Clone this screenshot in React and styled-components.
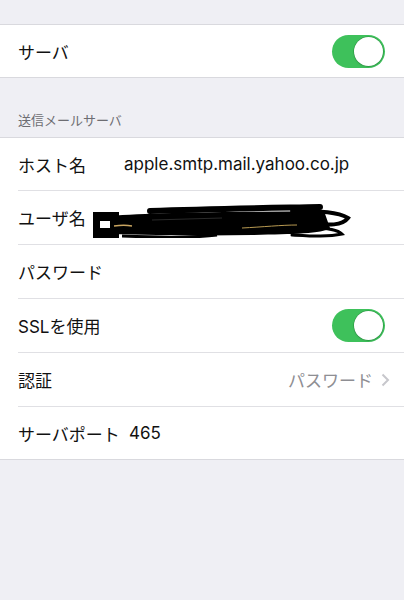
import React from 'react';
import styled, { createGlobalStyle } from 'styled-components';

const GlobalStyle = createGlobalStyle`
  html, body {
    margin: 0;
    padding: 0;
    background: #efeff4;
  }
  body {
    font-family: "Inter", "Noto Sans CJK JP", sans-serif;
    -webkit-font-smoothing: antialiased;
  }
`;

const Page = styled.div`
  width: 404px;
  height: 600px;
  background: #efeff4;
  padding-top: 24px;
  box-sizing: border-box;
`;

const Group = styled.div`
  background: #fff;
  border-top: 1px solid #d9d9de;
  border-bottom: 1px solid #d9d9de;
`;

const Row = styled.div`
  display: flex;
  align-items: center;
  height: ${p => p.$h || 53}px;
  margin-left: 18px;
  padding-right: 18px;
  border-bottom: ${p => (p.$last ? 'none' : '1px solid #e0e0e4')};
  box-sizing: content-box;
`;

const Label = styled.div`
  font-size: 17px;
  color: #111;
  width: ${p => (p.$w ? `${p.$w}px` : 'auto')};
  flex: ${p => (p.$w ? 'none' : '1')};
  white-space: nowrap;
`;

const Value = styled.div`
  flex: 1;
  font-size: 17px;
  color: #111;
  white-space: nowrap;
`;

const Detail = styled.div`
  display: flex;
  align-items: center;
  gap: 8px;
  font-size: 17px;
  color: #8e8e93;
  margin-right: -4px;
`;

const SectionHeader = styled.div`
  height: 59px;
  display: flex;
  align-items: flex-end;
  padding: 0 18px 8px;
  box-sizing: border-box;
  font-size: 13px;
  color: #6d6d72;
`;

const Track = styled.div`
  position: relative;
  width: 53px;
  height: 33px;
  border-radius: 17px;
  background: #3ec15b;
  margin-right: 1px;
`;

const Knob = styled.div`
  position: absolute;
  right: 2px;
  top: 2px;
  width: 29px;
  height: 29px;
  border-radius: 50%;
  background: #fff;
  box-shadow: 0 0 0 0.5px rgba(0, 80, 20, 0.4), 0 1px 2px rgba(0, 0, 0, 0.15);
`;

const Toggle = () => (
  <Track>
    <Knob />
  </Track>
);

const Redaction = () => (
  <svg width="262" height="40" viewBox="0 0 262 40" style={{ marginLeft: 6 }}>
    <rect x="1" y="14" width="26" height="26" fill="#000" />
    <rect x="8" y="23" width="10" height="7" fill="#fff" />
    <path d="M18 18 C60 14 150 14 232 13 L238 30 C230 36 200 36 160 37 C110 38 60 37 18 36 Z"
      fill="#000" />
    <path d="M58 13 C120 11 180 10 228 9" stroke="#000" strokeWidth="6"
      strokeLinecap="round" fill="none" />
    <path d="M200 13 C230 13 246 14 256 20 C250 28 236 27 222 26"
      stroke="#000" strokeWidth="4" strokeLinecap="round" fill="none" />
    <path d="M220 30 C236 30 246 32 250 36 C236 39 220 38 200 37"
      stroke="#000" strokeWidth="3" strokeLinecap="round" fill="none" />
    <path d="M30 38 C80 40 110 39 125 37" stroke="#000" strokeWidth="3" fill="none" />
    <path d="M22 28 C30 27 34 27 40 28" stroke="#c9a560" strokeWidth="1.5" fill="none" />
    <path d="M150 30 C170 29 190 27 205 27" stroke="#b89a52" strokeWidth="1" fill="none" />
    <path d="M60 22 L130 20" stroke="#2a2a2a" strokeWidth="1" fill="none" />
  </svg>
);

const Chevron = () => (
  <svg width="9" height="14" viewBox="0 0 9 14">
    <path d="M1.5 1.5 L7 7 L1.5 12.5" stroke="#c7c7cc" strokeWidth="2" fill="none" />
  </svg>
);

export default function App() {
  return (
    <>
      <GlobalStyle />
      <Page>
        <Group>
          <Row $h={52} $last>
            <Label>サーバ</Label>
            <Toggle />
          </Row>
        </Group>

        <SectionHeader>送信メールサーバ</SectionHeader>

        <Group>
          <Row $h={52}>
            <Label $w={106}>ホスト名</Label>
            <Value>apple.smtp.mail.yahoo.co.jp</Value>
          </Row>
          <Row>
            <Label $w={68}>ユーザ名</Label>
            <Redaction />
          </Row>
          <Row>
            <Label>パスワード</Label>
          </Row>
          <Row>
            <Label>SSLを使用</Label>
            <Toggle />
          </Row>
          <Row>
            <Label>認証</Label>
            <Detail>
              パスワード
              <Chevron />
            </Detail>
          </Row>
          <Row $h={52} $last>
            <Label $w={111}>サーバポート</Label>
            <Value>465</Value>
          </Row>
        </Group>
      </Page>
    </>
  );
}
